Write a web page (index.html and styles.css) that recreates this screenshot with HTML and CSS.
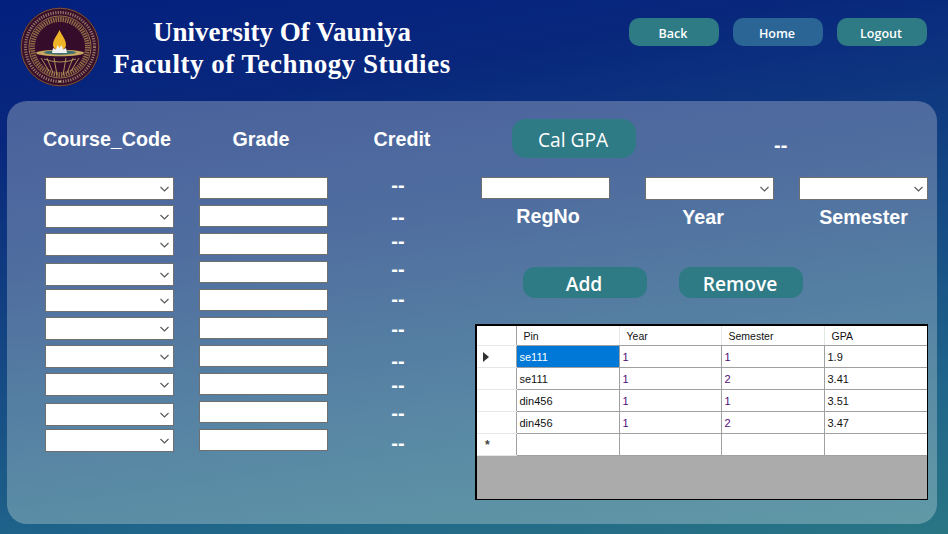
FILE: index.html
```html
<!DOCTYPE html>
<html lang="en">

<head>
    <meta charset="UTF-8">
    <meta name="viewport" content="width=device-width, initial-scale=1.0">
    <title>GPA Calculator</title>
    <link rel="stylesheet" href="styles.css">
</head>

<body>
    <header class="top-bar">
        <svg class="logo" viewBox="0 0 80 80" role="img" aria-label="University of Vauniya crest">
            <circle cx="40" cy="40" r="39.5" fill="#3a0f2c" />
            <circle cx="40" cy="40" r="38.8" fill="none" stroke="#8a6a3c" stroke-width="0.8" />
            <circle cx="40" cy="40" r="34.5" fill="none" stroke="#d4bd8f" stroke-width="3" stroke-dasharray="1.2 1.3" opacity="0.6" />
            <circle cx="40" cy="40" r="31" fill="none" stroke="#a98a4e" stroke-width="0.8" />
            <circle cx="40" cy="40" r="27.5" fill="none" stroke="#a8864f" stroke-width="5" stroke-dasharray="1.4 1" opacity="0.8" />
            <circle cx="40" cy="40" r="24.5" fill="#360c2b" />
            <path d="M39.5 23 C37 29 33 32 33 38 C33 41 36 43 39.5 43 C43 43 46 41 46 38 C46 32 42 29 39.5 23 Z" fill="#f0b429" />
            <ellipse cx="40" cy="46" rx="24" ry="3.2" fill="#c9a860" />
            <ellipse cx="40" cy="45.5" rx="16" ry="2.2" fill="#3f6f70" />
            <path d="M32 46 L33 41 L36 42.5 L37.5 38 L39.5 41 L41.5 38 L43 42.5 L46 41 L47 46 Z" fill="#f1f1f1" />
            <path d="M21 51 L29 64 M27 51 L33 66 M34 51 L37 68 M46 51 L43 68 M53 51 L47 66 M59 51 L51 64" stroke="#b89a5c" stroke-width="0.9" fill="none" />
            <path d="M24 52 Q40 58 56 52" stroke="#b89a5c" stroke-width="0.9" fill="none" />
            <circle cx="40" cy="74.5" r="1" fill="#d8c08a" />
        </svg>
        <h1 class="title">University Of Vauniya<br><span class="title-sub">Faculty of Technogy Studies</span></h1>
        <nav class="top-nav">
            <button class="nav-btn">Back</button>
            <button class="nav-btn nav-btn-blue">Home</button>
            <button class="nav-btn">Logout</button>
        </nav>
    </header>

    <main class="panel">
        <section class="course-grid">
            <div class="col col-course">
                <h2 class="col-head">Course_Code</h2>
                <div class="stack stack-course">
                    <select></select>
                    <select></select>
                    <select></select>
                    <select></select>
                    <select></select>
                    <select></select>
                    <select></select>
                    <select></select>
                    <select></select>
                    <select></select>
                </div>
            </div>
            <div class="col col-grade">
                <h2 class="col-head">Grade</h2>
                <div class="stack">
                    <input type="text">
                    <input type="text">
                    <input type="text">
                    <input type="text">
                    <input type="text">
                    <input type="text">
                    <input type="text">
                    <input type="text">
                    <input type="text">
                    <input type="text">
                </div>
            </div>
            <div class="col col-credit">
                <h2 class="col-head">Credit</h2>
                <div class="credits">
                    <span>--</span>
                    <span>--</span>
                    <span>--</span>
                    <span>--</span>
                    <span>--</span>
                    <span>--</span>
                    <span>--</span>
                    <span>--</span>
                    <span>--</span>
                    <span>--</span>
                </div>
            </div>
        </section>

        <section class="side">
            <div class="gpa-row">
                <button class="big-btn gpa-btn">Cal GPA</button>
                <span class="gpa-value">--</span>
            </div>
            <div class="fields">
                <div class="field field-reg">
                    <input type="text" id="regNo">
                    <label for="regNo">RegNo</label>
                </div>
                <div class="field field-year">
                    <select id="year"></select>
                    <label for="year">Year</label>
                </div>
                <div class="field">
                    <select id="semester"></select>
                    <label for="semester">Semester</label>
                </div>
            </div>
            <div class="actions">
                <button class="big-btn">Add</button>
                <button class="big-btn">Remove</button>
            </div>
            <div class="grid-view">
                <table>
                    <thead>
                        <tr>
                            <th class="row-head"></th>
                            <th class="col-pin">Pin</th>
                            <th class="col-year">Year</th>
                            <th class="col-sem">Semester</th>
                            <th>GPA</th>
                        </tr>
                    </thead>
                    <tbody>
                        <tr>
                            <td class="row-head"><svg class="arrow" viewBox="0 0 6 10"><path d="M0 0 L6 5 L0 10 Z" /></svg></td>
                            <td class="selected">se111</td>
                            <td class="num">1</td>
                            <td class="num">1</td>
                            <td>1.9</td>
                        </tr>
                        <tr>
                            <td class="row-head"></td>
                            <td>se111</td>
                            <td class="num">1</td>
                            <td class="num">2</td>
                            <td>3.41</td>
                        </tr>
                        <tr>
                            <td class="row-head"></td>
                            <td>din456</td>
                            <td class="num">1</td>
                            <td class="num">1</td>
                            <td>3.51</td>
                        </tr>
                        <tr>
                            <td class="row-head"></td>
                            <td>din456</td>
                            <td class="num">1</td>
                            <td class="num">2</td>
                            <td>3.47</td>
                        </tr>
                        <tr>
                            <td class="row-head star">*</td>
                            <td></td>
                            <td></td>
                            <td></td>
                            <td></td>
                        </tr>
                    </tbody>
                </table>
            </div>
        </section>
    </main>
</body>

</html>
```

FILE: styles.css
```css
body {
    margin: 0;
    height: 534px;
    overflow: hidden;
    background: linear-gradient(170deg, #04207f 0%, #08277c 20%, #20668a 80%, #297584 100%);
    font-family: "Liberation Sans", Arial, sans-serif;
    color: #fff;
}

.top-bar {
    display: flex;
    align-items: flex-start;
    height: 101px;
    box-sizing: border-box;
    padding: 7px 21px 0 20px;
}

.logo {
    width: 80px;
    height: 80px;
    flex: none;
}

.title {
    width: 364px;
    margin: 9px 0 0 0;
    font-family: "Liberation Serif", "Times New Roman", serif;
    font-size: 27px;
    font-weight: bold;
    line-height: 32px;
    text-align: center;
    white-space: nowrap;
}

.title-sub {
    letter-spacing: 0.52px;
}

.top-nav {
    display: flex;
    gap: 14px;
    margin: 11px 0 0 auto;
}

button {
    border: none;
    color: #fff;
    font-family: "Open Sans", "Noto Sans", sans-serif;
    cursor: pointer;
    padding: 0;
}

.nav-btn {
    width: 90px;
    height: 28px;
    padding: 2px 2px 0 0;
    border-radius: 10px;
    background-color: #2e7a85;
    font-size: 12.5px;
    font-weight: 600;
}

.nav-btn-blue {
    background-color: #2b6595;
}

.panel {
    display: flex;
    height: 423px;
    margin: 0 11px 0 7px;
    box-sizing: border-box;
    padding: 18px 9px 0 38px;
    border-radius: 20px;
    background: linear-gradient(172deg, #4a619c 0%, #4f6d9f 30%, #5a8ca5 75%, #6199a6 100%);
}

.course-grid {
    display: flex;
}

.col {
    display: flex;
    flex-direction: column;
}

.col-head {
    height: 40px;
    margin: 0 0 18px 0;
    font-size: 19.7px;
    font-weight: bold;
    line-height: 40px;
    text-align: center;
    white-space: nowrap;
}

.col-course {
    width: 129px;
}

.col-course .col-head {
    margin-left: -5px;
}

.col-grade {
    width: 129px;
    margin-left: 25px;
}

.col-grade .col-head {
    padding-right: 5px;
}

.col-credit {
    width: 80px;
    margin-left: 34px;
}

.stack {
    display: flex;
    flex-direction: column;
    gap: 6px;
}

.stack-course {
    gap: 5px;
}

.stack-course select:nth-child(4),
.stack-course select:nth-child(9) {
    margin-top: 2px;
}

.stack-course select:nth-child(5),
.stack-course select:nth-child(10) {
    margin-top: -2px;
}

input,
select {
    display: block;
    width: 129px;
    box-sizing: border-box;
    margin: 0;
    border: 1px solid #6f6f6f;
    border-radius: 0;
    background-color: #fff;
}

input {
    height: 22px;
}

select {
    height: 23px;
    appearance: none;
    background-image: url("data:image/svg+xml,%3Csvg xmlns='http://www.w3.org/2000/svg' width='9' height='6'%3E%3Cpath d='M.5 1 L4.5 5 L8.5 1' fill='none' stroke='%23555' stroke-width='1.1'/%3E%3C/svg%3E");
    background-repeat: no-repeat;
    background-position: right 4px center;
}

.credits {
    display: flex;
    flex-direction: column;
    padding-right: 8px;
    margin-top: -2px;
    font-size: 20px;
    font-weight: bold;
    text-align: center;
}

.credits span {
    height: 20px;
    line-height: 20px;
}

.credits span:nth-child(2),
.credits span:nth-child(7) {
    margin-top: 12px;
}

.credits span:nth-child(3),
.credits span:nth-child(8) {
    margin-top: 4px;
}

.credits span:nth-child(4),
.credits span:nth-child(9) {
    margin-top: 8px;
}

.credits span:nth-child(5),
.credits span:nth-child(6),
.credits span:nth-child(10) {
    margin-top: 10px;
}

.side {
    width: 453px;
    margin-left: auto;
}

.gpa-row {
    display: flex;
    height: 39px;
    padding-left: 37px;
}

.big-btn {
    width: 124px;
    height: 31px;
    padding: 2px 2px 0 0;
    border-radius: 12px;
    background-color: #2e7a85;
    font-size: 19.2px;
    font-weight: 600;
}

.gpa-btn {
    height: 39px;
    border-radius: 14px;
    font-weight: 500;
}

.gpa-value {
    margin: 13px 0 0 138px;
    font-size: 20px;
    font-weight: bold;
    line-height: 26px;
}

.fields {
    display: flex;
    margin-top: 19px;
    padding-left: 6px;
}

.field-reg {
    margin-right: 35px;
}

.field-year {
    margin-right: 25px;
}

.field label {
    display: block;
    margin-top: 5px;
    font-size: 19.7px;
    font-weight: bold;
    line-height: 24px;
    text-align: center;
}

.field-reg label {
    padding-left: 5px;
}

.field-year label {
    padding-right: 13px;
}

.actions {
    display: flex;
    gap: 32px;
    margin-top: 38px;
    padding-left: 48px;
}

.grid-view {
    width: 453px;
    height: 176px;
    box-sizing: border-box;
    margin-top: 26px;
    border: 1px solid #000;
    border-width: 2px 1px 1px 2px;
    background-color: #ababab;
}

table {
    width: 450px;
    border-collapse: collapse;
    table-layout: fixed;
    background-color: #fff;
    color: #111;
    font-size: 11px;
}

th,
td {
    box-sizing: border-box;
}

th {
    height: 19px;
    padding: 2px 0 0 7px;
    border-right: 1px solid #e6e6e6;
    border-bottom: 1px solid #a0a0a0;
    font-size: 10.5px;
    font-weight: normal;
    text-align: left;
}

td {
    height: 22px;
    padding: 2px 0 0 3px;
    border-right: 1px solid #a0a0a0;
    border-bottom: 1px solid #a0a0a0;
}

th:last-child,
td:last-child {
    border-right: none;
}

.row-head {
    width: 39px;
    padding: 2px 0 0 6px;
    border-right: 1px solid #a0a0a0;
    border-bottom-color: #e6e6e6;
}

.col-pin {
    width: 103px;
}

.col-year {
    width: 102px;
}

.col-sem {
    width: 103px;
}

.num {
    color: #520a78;
}

.selected {
    background-color: #0078d7;
    color: #fff;
}

.arrow {
    display: block;
    width: 6px;
    height: 10px;
    fill: #333;
}

td.star {
    padding-left: 8px;
    font-size: 12px;
    font-weight: bold;
    line-height: 12px;
    color: #444;
}
```
